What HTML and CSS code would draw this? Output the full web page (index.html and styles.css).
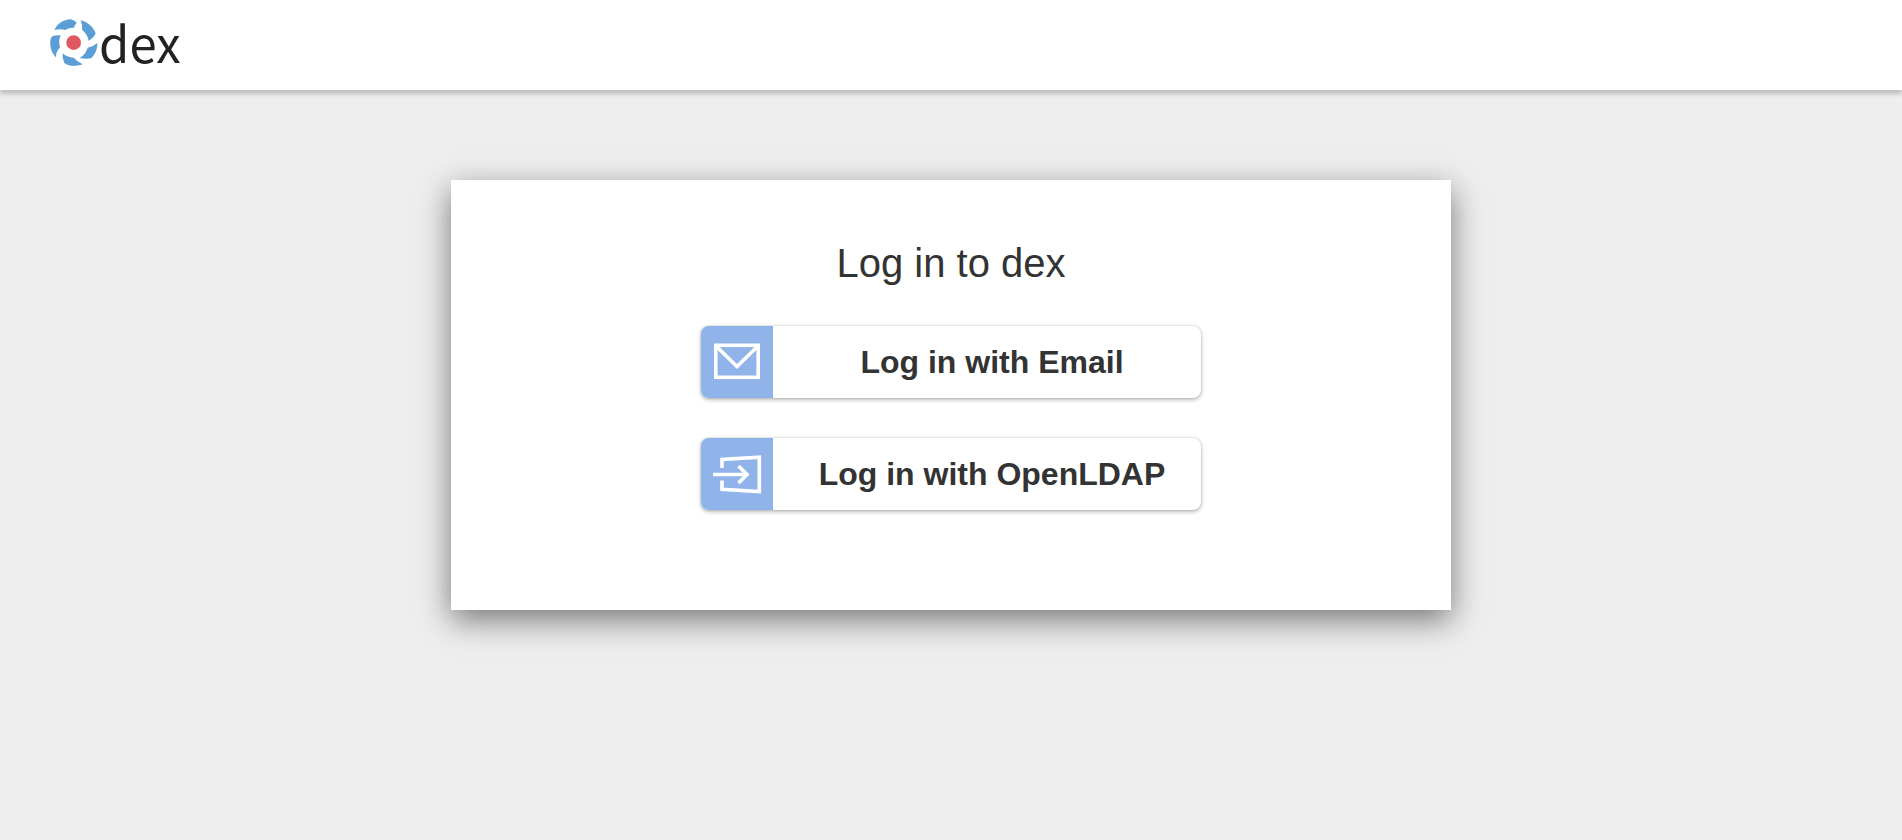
FILE: index.html
```html
<!DOCTYPE html>
<html lang="en">
<head>
<meta charset="utf-8">
<meta name="viewport" content="width=device-width, initial-scale=1">
<title>dex</title>
<link rel="stylesheet" href="styles.css">
</head>
<body>
<header class="navbar">
  <a class="brand" href="#">
    <svg class="brand-mark" viewBox="30 28 144 144" aria-hidden="true">
      <g fill="#5b9ed5">
        <path d="M43 61C52 42 70 30 93 29Q106 33 110 40Q104 46 102 54Q88 53 76 61Q62 56 43 61Z"/>
        <path d="M122 32C143 37 160 52 167 71Q165 80 146 94Q144 75 126 60Q128 46 122 32Z"/>
        <path d="M172 100C173 119 164 136 153 146Q137 149 119 145Q137 134 143 114Q158 112 172 100Z"/>
        <path d="M68 131Q80 143 101 144Q111 155 128 164C108 171 86 170 73 160Q66 145 68 131Z"/>
        <path d="M31 97Q30 85 38 79Q49 76 62 77Q54 93 60 114Q48 123 48 143C36 131 30 115 31 97Z"/>
      </g>
      <circle cx="101" cy="99" r="22" fill="#e0575f"/>
    </svg>
    <span class="brand-name">dex</span>
  </a>
</header>
<main class="container">
  <section class="panel">
    <h1 class="heading">Log in to dex</h1>
    <div class="connectors">
      <button class="connector" type="button">
        <span class="connector-icon">
          <svg class="icon" viewBox="0 0 72 72" fill="none" stroke="#fff" stroke-width="3.6" aria-hidden="true">
            <rect x="14.8" y="19.3" width="42.4" height="32"/>
            <path d="M16 21L36 40.500L56 21"/>
          </svg>
        </span>
        <span class="connector-text">Log in with Email</span>
      </button>
      <button class="connector" type="button">
        <span class="connector-icon">
          <svg class="icon" viewBox="0 0 72 72" fill="none" stroke="#fff" stroke-width="3.6" aria-hidden="true">
            <path d="M21 30V21.500L58.300 19.200V53.600L21 51.200V42.500"/>
            <path d="M12 36.500H45"/>
            <path d="M37.500 28L46 36.500L37.500 45"/>
          </svg>
        </span>
        <span class="connector-text">Log in with OpenLDAP</span>
      </button>
    </div>
  </section>
</main>
</body>
</html>
```
FILE: styles.css
```css
* {
  box-sizing: border-box;
}

body {
  margin: 0;
  background: #eee;
  color: #333;
  font-family: "Liberation Sans", Arial, sans-serif;
}

.navbar {
  display: flex;
  align-items: center;
  height: 90px;
  padding: 0 50px;
  background: #fff;
  box-shadow: 0 4px 4px rgba(0, 0, 0, 0.2);
}

.brand {
  display: flex;
  align-items: flex-start;
  gap: 1px;
  height: 90px;
  padding-top: 19px;
  color: #222;
  text-decoration: none;
}

.brand-mark {
  width: 48px;
  height: 48px;
}

.brand-name {
  font-family: "Noto Sans CJK SC", "Open Sans", sans-serif;
  font-size: 49px;
  line-height: 46px;
}

.container {
  display: flex;
  justify-content: center;
  padding: 90px 20px;
}

.panel {
  width: 100%;
  max-width: 1000px;
  padding: 60px 20px 100px;
  background: #fff;
  text-align: center;
  box-shadow: 0 10px 30px rgba(0, 0, 0, 0.5);
}

.heading {
  margin: 0 0 40px;
  font-size: 40px;
  font-weight: 400;
  line-height: 46px;
}

.connectors {
  display: flex;
  flex-direction: column;
  align-items: center;
  gap: 40px;
}

.connector {
  display: flex;
  align-items: center;
  width: 100%;
  max-width: 500px;
  height: 72px;
  padding: 0;
  overflow: hidden;
  border: 0;
  border-radius: 8px;
  background: #fff;
  color: #333;
  font: bold 32px/36px "Liberation Sans", Arial, sans-serif;
  box-shadow: 0 2px 4px rgba(0, 0, 0, 0.25), 0 0 2px rgba(0, 0, 0, 0.25);
  cursor: pointer;
}

.connector-icon {
  flex: none;
  width: 72px;
  height: 72px;
  background: #90b4e9;
}

.icon {
  display: block;
  width: 72px;
  height: 72px;
}

.connector-text {
  flex: 1;
  padding-left: 10px;
  white-space: nowrap;
}
```
